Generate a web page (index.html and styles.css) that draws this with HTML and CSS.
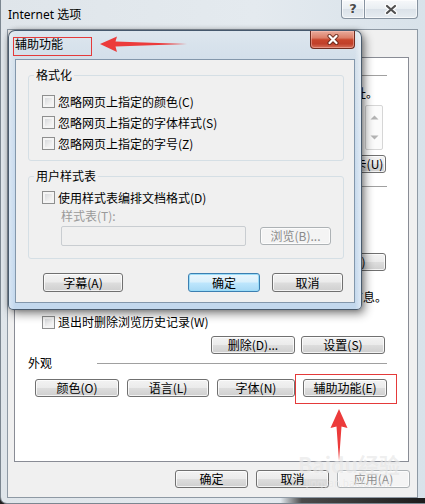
FILE: index.html
```html
<!DOCTYPE html>
<html lang="zh-CN">
<head>
<meta charset="utf-8">
<title>Internet 选项</title>
<link rel="stylesheet" href="styles.css">
</head>
<body>
<div class="desk">
  <section class="win">
    <header class="win-title">
      <span class="win-caption">Internet 选项</span>
      <div class="caps">
        <span class="cap cap-help">?</span>
        <span class="cap cap-close">
          <svg width="14" height="11" viewBox="0 0 14 11"><path class="x-halo" d="M3 2L11 9M11 2L3 9"/><path class="x-ink" d="M3 2L11 9M11 2L3 9"/></svg>
        </span>
      </div>
    </header>
    <div class="win-client">
      <div class="panel">
        <div class="head head-home"><span class="head-line"></span></div>
        <p class="note note-home">若要创建多个主页选项卡，请在各行输入一个地址。</p>
        <div class="urlbox">
          <span class="vscroll">
            <svg width="9" height="5" viewBox="0 0 9 5"><path d="M0.5 4.5L4.5 0.5L8.5 4.5Z"/></svg>
            <svg width="9" height="5" viewBox="0 0 9 5"><path d="M0.5 0.5L4.5 4.5L8.5 0.5Z"/></svg>
          </span>
        </div>
        <div class="btnrow btnrow-home">
          <button class="btn btn-home">使用新选项卡(U)</button>
        </div>
        <div class="head head-start"><span class="head-line"></span></div>
        <div class="btnrow btnrow-tabs"><button class="btn btn-tabs">选项卡(T)</button></div>
        <p class="note note-history">删除临时文件、历史记录、Cookie、保存的密码和网页表单信息。</p>
        <label class="check check-exit"><span class="cb"></span>退出时删除浏览历史记录(W)</label>
        <div class="btnrow btnrow-history">
          <button class="btn btn-w84">删除(D)...</button>
          <button class="btn btn-w84">设置(S)</button>
        </div>
        <div class="head head-look"><span class="head-label">外观</span><span class="head-line"></span></div>
        <div class="look-row">
          <button class="btn">颜色(O)</button>
          <button class="btn">语言(L)</button>
          <button class="btn">字体(N)</button>
          <button class="btn">辅助功能(E)</button>
        </div>
      </div>
      <div class="footer">
        <button class="btn">确定</button>
        <button class="btn">取消</button>
        <button class="btn btn-disabled">应用(A)</button>
      </div>
    </div>
  </section>

  <section class="dlg">
    <header class="dlg-title">
      <span class="dlg-caption">辅助功能</span>
      <span class="dlg-close">
        <svg width="14" height="11" viewBox="0 0 14 11"><path class="dx-halo" d="M3.5 2L10.5 9M10.5 2L3.5 9"/><path class="dx-ink" d="M3.5 2L10.5 9M10.5 2L3.5 9"/></svg>
      </span>
    </header>
    <div class="dlg-client">
      <fieldset class="group group-format">
        <legend>格式化</legend>
        <label class="check"><span class="cb"></span>忽略网页上指定的颜色(C)</label>
        <label class="check"><span class="cb"></span>忽略网页上指定的字体样式(S)</label>
        <label class="check"><span class="cb"></span>忽略网页上指定的字号(Z)</label>
      </fieldset>
      <fieldset class="group group-style">
        <legend>用户样式表</legend>
        <label class="check"><span class="cb"></span>使用样式表编排文档格式(D)</label>
        <div class="sheet-label">样式表(T):</div>
        <div class="sheet-row">
          <span class="field"></span>
          <button class="btn btn-disabled btn-browse">浏览(B)...</button>
        </div>
      </fieldset>
      <div class="dlg-buttons">
        <button class="btn btn-caption">字幕(A)</button>
        <button class="btn btn-default btn-ok">确定</button>
        <button class="btn btn-cancel">取消</button>
      </div>
    </div>
  </section>

  <div class="watermark"><span class="wm-logo">Baidu经验</span><span class="wm-url">jingyan.baidu.com</span></div>

  <div class="mark mark-title"></div>
  <div class="mark mark-btn"></div>
  <svg class="arrow arrow-left" width="92" height="20" viewBox="98 34 92 20"><polygon points="100,44 117,36.5 115.5,41.5 187,44 115.5,46.5 117,52"/></svg>
  <svg class="arrow arrow-up" width="20" height="56" viewBox="329 407 20 56"><polygon points="339,409 347.5,428 341.5,426.5 339,461 336.5,426.5 330.5,428"/></svg>
</div>
</body>
</html>
```

FILE: styles.css
```css
* { box-sizing: border-box; }
html, body { margin: 0; padding: 0; }
body {
  width: 425px;
  height: 504px;
  overflow: hidden;
  background: #1f1f1f;
  font-family: "Noto Sans CJK SC", "Noto Sans", sans-serif;
  font-size: 12px;
  line-height: 14px;
  color: #000;
}
p { margin: 0; }
.desk { position: relative; width: 425px; height: 504px; }

/* ---------- generic controls ---------- */
.btn {
  height: 18px;
  margin: 0;
  padding: 0;
  font: inherit;
  font-size: 12px;
  line-height: 14px;
  color: #000;
  white-space: nowrap;
  border: 1px solid #707070;
  border-radius: 3px;
  background: linear-gradient(#f3f3f3 0%, #ebebeb 48%, #dddddd 52%, #cfcfcf 100%);
  box-shadow: inset 0 0 0 1px rgba(255,255,255,.75);
  display: flex;
  align-items: center;
  justify-content: center;
}
.btn-default {
  border-color: #3c7fb1;
  background: linear-gradient(#eaf6fd 0%, #d9f0fc 48%, #bee6fd 52%, #a7d9f5 100%);
  box-shadow: inset 0 0 0 1px #9adcf8;
}
.btn-disabled {
  border-color: #adb2b5;
  background: #f4f4f4;
  box-shadow: inset 0 0 0 1px #fcfcfc;
  color: #8a8a8a;
}
.cb {
  width: 13px;
  height: 13px;
  flex: none;
  border: 1px solid #8e8f8f;
  background: linear-gradient(135deg, #cfd2d6 0%, #eeeeee 60%, #fbfbfb 100%);
  box-shadow: inset 0 0 0 2px #f4f4f4;
}
.check {
  display: flex;
  align-items: center;
  gap: 3px;
  white-space: nowrap;
}

/* ---------- outer window ---------- */
.win {
  position: absolute;
  left: 0;
  top: 0;
  width: 425px;
  height: 504px;
  display: flex;
  flex-direction: column;
  padding: 0 7px 6px;
  border-radius: 0 0 0 7px;
  background:
    linear-gradient(to right, rgba(0,0,0,0) 0%, rgba(0,0,0,0) 66%, #4b4b4b 71%, #1c1c1c 100%) left bottom / 100% 6px no-repeat,
    linear-gradient(to right, #dfe5ea 0%, #e4eaef 60%, #d8e2ea 100%);
  box-shadow: inset 1px 0 0 #7b8690, inset 0 -1px 0 #7b8690;
}
.win-title {
  height: 29px;
  flex: none;
  display: flex;
  justify-content: space-between;
  align-items: flex-start;
}
.win-caption {
  margin: 7px 0 0 1px;
  line-height: 16px;
  font-family: "Noto Sans", "Noto Sans CJK SC", sans-serif;
  font-size: 12px;
}
.caps { display: flex; }
.cap {
  height: 19px;
  display: flex;
  align-items: center;
  justify-content: center;
  border: 1px solid #8793a0;
  border-top: 0;
  background: linear-gradient(#f6f8fa 0%, #e9eef2 50%, #dbe2e9 52%, #e6ecf1 100%);
  box-shadow: inset 0 0 0 1px rgba(255,255,255,.65);
}
.cap-help {
  width: 23px;
  border-right: 0;
  border-radius: 0 0 0 4px;
  font: bold 13px/14px "DejaVu Sans", sans-serif;
  color: #4a4a4a;
  text-shadow: 0 0 2px #fff;
}
.cap-close { width: 54px; border-radius: 0 0 4px 0; }
.x-halo { stroke: #ffffff; stroke-width: 4.5; stroke-linecap: round; fill: none; opacity: .9; }
.x-ink { stroke: #505050; stroke-width: 2.2; stroke-linecap: round; fill: none; }

.win-client {
  flex: 1;
  display: flex;
  flex-direction: column;
  background: #f0f0f0;
  border: 1px solid #8e99a4;
}
.panel {
  flex: none;
  height: 405px;
  margin: 27px 8px 0 6px;
  padding: 0 21px 0 13px;
  background: #fff;
  border: 1px solid #898c95;
  display: flex;
  flex-direction: column;
}
.head {
  height: 14px;
  display: flex;
  align-items: center;
  flex: none;
}
.head-line {
  flex: 1;
  height: 1px;
  margin-left: 69px;
  background: #a0a0a0;
}
.head-label + .head-line { margin-left: 45px; }
.head-home { margin-top: 10px; }
.head-start { margin-top: 6px; }
.head-look { margin-top: 2px; }
.note { height: 14px; white-space: nowrap; text-align: right; }
.note-home { margin: 4px 9px 0 0; }
.note-history { margin-top: 19px; }
.urlbox {
  height: 45px;
  margin: 5px 4px 0 42px;
  display: flex;
  justify-content: flex-end;
  background: #fff;
}
.vscroll {
  width: 18px;
  display: flex;
  flex-direction: column;
  align-items: center;
  justify-content: space-between;
  padding: 9px 0 9px;
  border: 1px solid #d6d6d6;
  border-radius: 2px;
  background: #fbfbfb;
}
.vscroll path { fill: #b4b4b4; }
.btnrow {
  display: flex;
  justify-content: flex-end;
  gap: 6px;
  flex: none;
}
.btnrow-home { margin: 5px 1px 0 0; }
.btn-home { width: 94px; }
.btnrow-tabs { margin: 60px 1px 0 0; }
.btn-tabs { width: 92px; }
.check-exit { height: 14px; margin: 11px 0 0 14px; }
.btnrow-history { margin: 7px 2px 0 0; }
.btn-w84 { width: 84px; }
.look-row {
  margin: 9px 0 0 7px;
  display: grid;
  grid-template-columns: 84px 82px 78px 84px;
  column-gap: 8px;
}
.footer {
  display: flex;
  justify-content: flex-end;
  gap: 8px;
  margin-top: 8px;
  padding-right: 7px;
}
.footer .btn { width: 73px; }

/* ---------- accessibility dialog ---------- */
.dlg {
  position: absolute;
  left: 8px;
  top: 30px;
  width: 354px;
  height: 280px;
  display: flex;
  flex-direction: column;
  padding: 0 6px 6px;
  border: 1px solid rgba(38,56,76,.8);
  border-radius: 7px 7px 5px 5px;
  background:
    linear-gradient(to right, rgba(255,255,255,.35), rgba(255,255,255,0) 6px, rgba(255,255,255,0) calc(100% - 6px), rgba(255,255,255,.45)),
    linear-gradient(180deg, #dde6ee 0%, #d3dfea 10%, #c9dbed 40%, #c3d8ed 100%);
  box-shadow: 3px 4px 10px rgba(0,0,0,.45), 0 0 5px rgba(0,0,0,.25);
}
.dlg-title {
  height: 28px;
  flex: none;
  display: flex;
  justify-content: space-between;
  align-items: flex-start;
}
.dlg-caption { margin-top: 5px; line-height: 16px; }
.dlg-close {
  width: 45px;
  height: 18px;
  display: flex;
  align-items: center;
  justify-content: center;
  border: 1px solid #6f2c20;
  border-top: 0;
  border-radius: 0 0 4px 4px;
  background: linear-gradient(#e9ab9c 0%, #dc7f69 40%, #c8452c 52%, #c0402a 75%, #d6715a 100%);
  box-shadow: inset 0 0 0 1px rgba(255,200,190,.45);
}
.dx-halo { stroke: #5e2318; stroke-width: 4.2; stroke-linecap: round; fill: none; opacity: .8; }
.dx-ink { stroke: #ffffff; stroke-width: 2.2; stroke-linecap: round; fill: none; }
.dlg-client {
  flex: 1;
  display: flex;
  flex-direction: column;
  padding: 8px 10px 0 12px;
  background: #f0f0f0;
  border: 1px solid #8397ab;
}
.group {
  margin: 0;
  min-width: 0;
  border: 1px solid #d5dfe5;
  border-radius: 3px;
  padding: 9px 8px 6px 0;
}
.group legend {
  margin-left: 5px;
  padding: 0 2px;
  line-height: 14px;
}
.group .check { height: 21px; margin-left: 13px; }
.group-style { margin-top: 8px; padding: 4px 8px 12px 0; }
.sheet-label { height: 14px; margin: 1px 0 0 32px; color: #9a9a9a; }
.sheet-row {
  display: flex;
  align-items: center;
  gap: 14px;
  margin: 3px 0 0 32px;
}
.field {
  width: 185px;
  height: 20px;
  border: 1px solid #c9cdd1;
  border-radius: 2px;
  background: #f0f0f0;
}
.btn-browse { width: 71px; }
.dlg-buttons {
  display: flex;
  margin: 14px 1px 0 15px;
}
.dlg-buttons .btn { height: 19px; }
.btn-caption { width: 80px; margin-right: auto; }
.btn-ok { width: 72px; }
.btn-cancel { width: 71px; margin-left: 12px; }

/* ---------- watermark & annotations ---------- */
.watermark {
  position: absolute;
  left: 298px;
  top: 452px;
  display: flex;
  flex-direction: column;
  align-items: center;
  color: rgba(200,200,200,.3);
  text-shadow: 0 0 1px rgba(255,255,255,.6);
  pointer-events: none;
}
.wm-logo { font: bold 21px/25px "Noto Sans CJK SC", sans-serif; }
.wm-url { font: 10px/12px "Noto Sans", sans-serif; }
.mark {
  position: absolute;
  border: 1px solid #e43a3a;
}
.mark-title { left: 13px; top: 37px; width: 79px; height: 19px; }
.mark-btn { left: 295px; top: 374px; width: 102px; height: 30px; }
.arrow { position: absolute; }
.arrow polygon { fill: #ec3b3b; }
.arrow-left { left: 98px; top: 34px; }
.arrow-up { left: 329px; top: 407px; }
```
